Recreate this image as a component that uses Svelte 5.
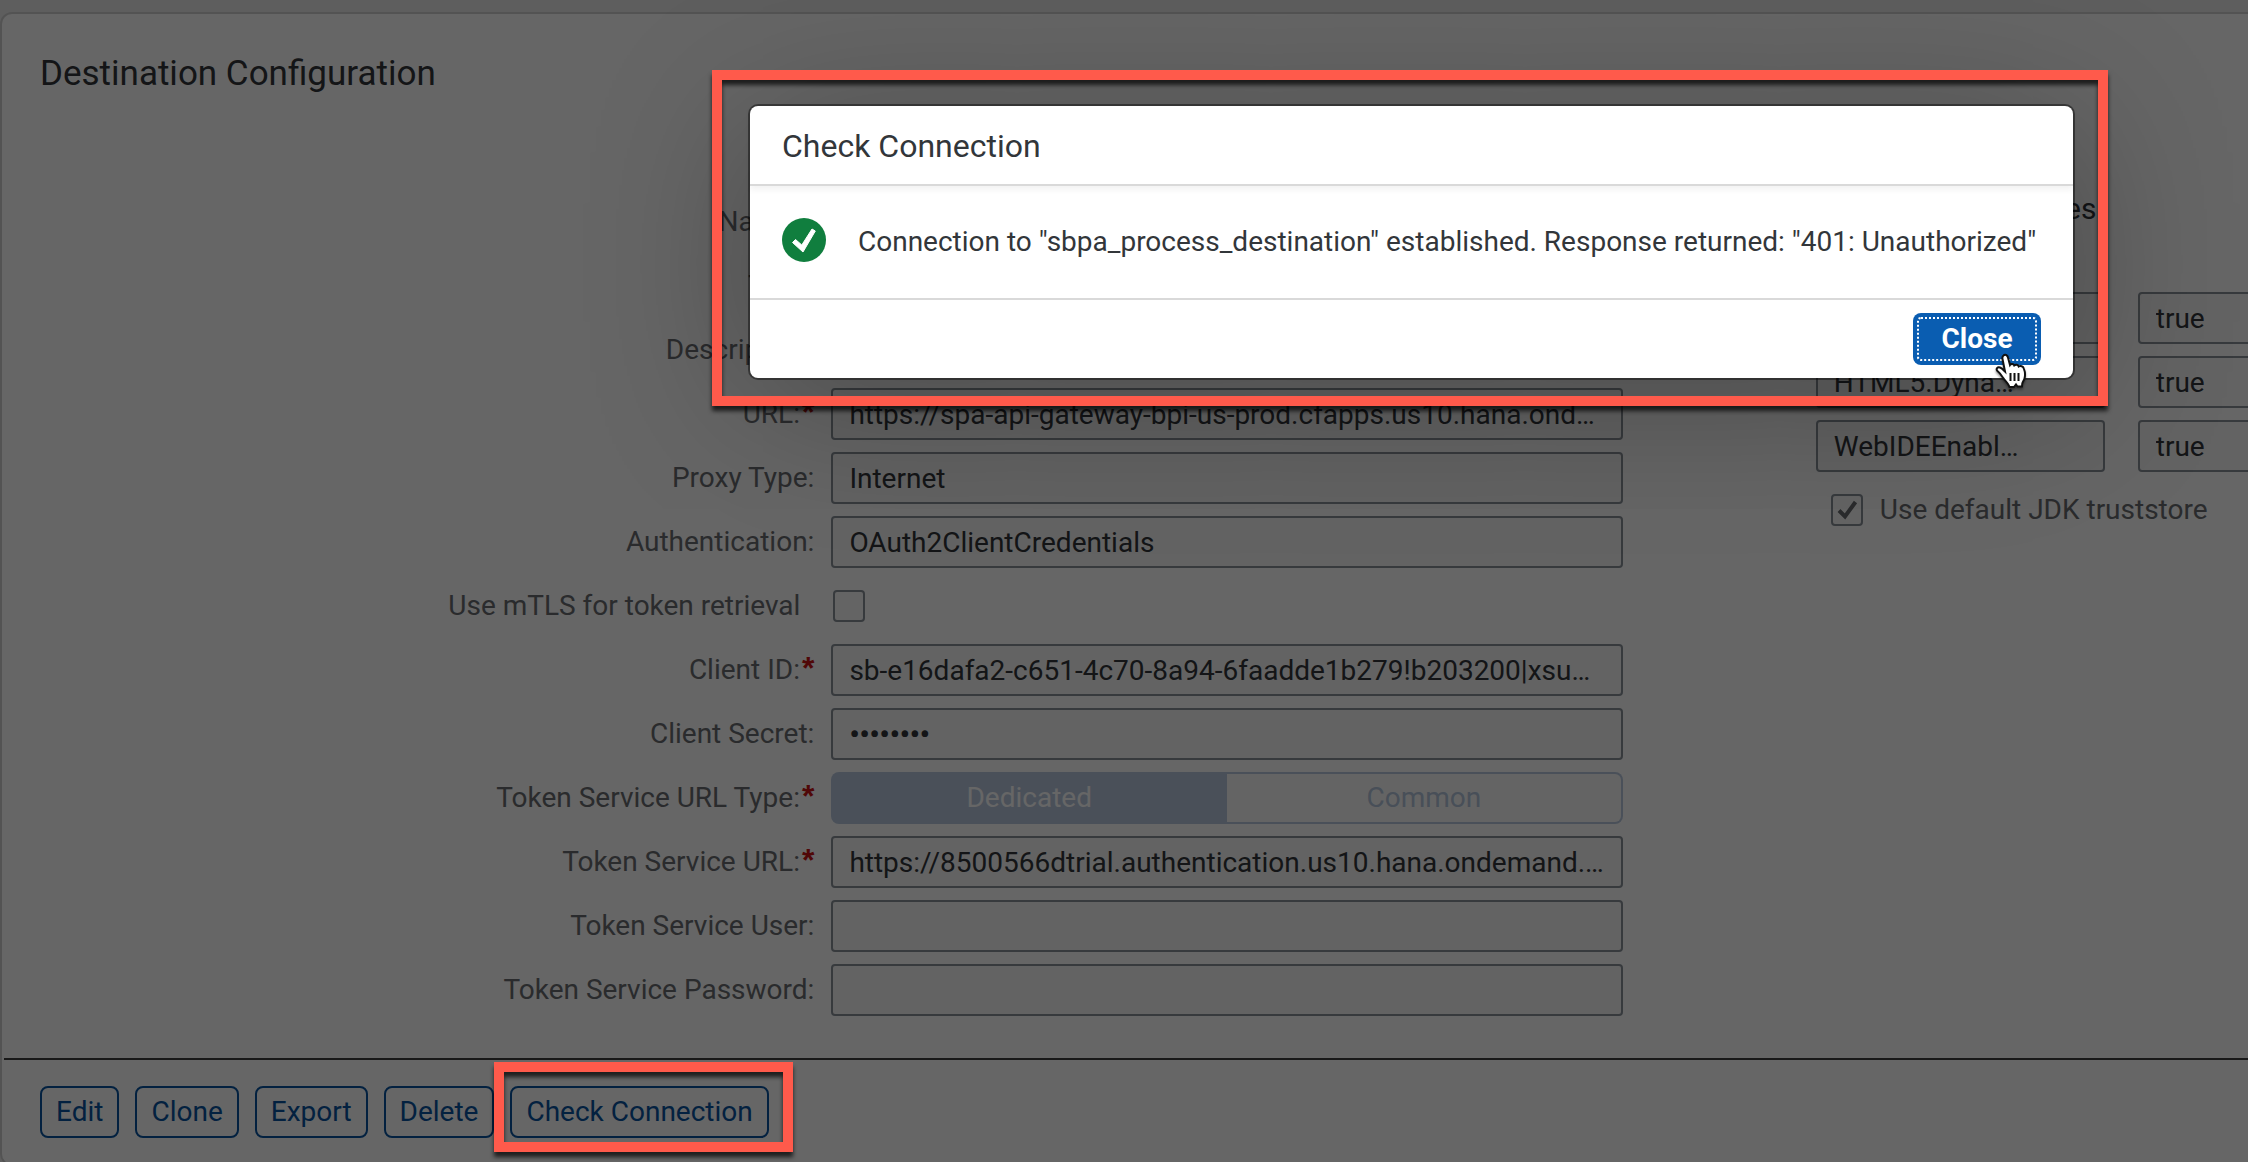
<script>
  const fields = [
    { id: 'name', label: 'Name:', required: true, value: 'sbpa_process_destination' },
    { id: 'type', label: 'Type:', value: 'HTTP' },
    { id: 'description', label: 'Description:', value: '' },
    { id: 'url', label: 'URL:', required: true, value: 'https://spa-api-gateway-bpi-us-prod.cfapps.us10.hana.ond…' },
    { id: 'proxy', label: 'Proxy Type:', value: 'Internet' },
    { id: 'auth', label: 'Authentication:', value: 'OAuth2ClientCredentials' },
    { id: 'mtls', label: 'Use mTLS for token retrieval', kind: 'checkbox' },
    { id: 'client-id', label: 'Client ID:', required: true, value: 'sb-e16dafa2-c651-4c70-8a94-6faadde1b279!b203200|xsu…' },
    { id: 'client-secret', label: 'Client Secret:', value: '••••••••', secret: true },
    { id: 'url-type', label: 'Token Service URL Type:', required: true, kind: 'segmented' },
    { id: 'token-url', label: 'Token Service URL:', required: true, value: 'https://8500566dtrial.authentication.us10.hana.ondemand.…' },
    { id: 'token-user', label: 'Token Service User:', value: '' },
    { id: 'token-password', label: 'Token Service Password:', value: '' },
  ];

  const properties = [
    { key: '', value: 'true' },
    { key: 'HTML5.Dyna…', value: 'true' },
    { key: 'WebIDEEnabl…', value: 'true' },
  ];

  const actions = ['Edit', 'Clone', 'Export', 'Delete'];
</script>

<div class="page">
  <main class="card">
    <h1>Destination Configuration</h1>

    <div class="content">
      <form class="form">
        {#each fields as field}
          <label for={field.id} class:loose={field.kind === 'checkbox'}>
            {field.label}{#if field.required}<b class="star">*</b>{/if}
          </label>
          {#if field.kind === 'checkbox'}
            <span class="check-cell"><input class="check" type="checkbox" id={field.id} /></span>
          {:else if field.kind === 'segmented'}
            <div class="segmented">
              <button type="button" id={field.id} class="selected" disabled>Dedicated</button>
              <button type="button" disabled>Common</button>
            </div>
          {:else}
            <input class="field" class:secret={field.secret} type="text" id={field.id} value={field.value} readonly />
          {/if}
        {/each}
      </form>

      <section class="extra">
        <h2>Additional Properties</h2>
        <div class="properties">
          {#each properties as property, i}
            <input class="field" type="text" aria-label="Property {i + 1} name" value={property.key} readonly />
            <input class="field" type="text" aria-label="Property {i + 1} value" value={property.value} readonly />
          {/each}
        </div>
        <label class="truststore">
          <span class="check-box">
            <input class="check" type="checkbox" checked />
            <svg viewBox="0 0 32 32" aria-hidden="true"><path d="M8 16.500 L14 22.500 L24.500 8" /></svg>
          </span>
          Use default JDK truststore
        </label>
      </section>
    </div>

    <footer class="actions">
      {#each actions as action}
        <button type="button" class="action">{action}</button>
      {/each}
      <div class="marked">
        <button type="button" class="action">Check Connection</button>
        <div class="frame around-button"></div>
      </div>
    </footer>
  </main>

  <div class="backdrop"></div>

  <div class="stage">
    <div class="dialog" role="dialog" aria-modal="true" aria-labelledby="dialog-title">
      <h2 id="dialog-title" class="dialog-title">Check Connection</h2>
      <div class="message">
        <svg class="success" viewBox="0 0 44 44" aria-hidden="true">
          <circle cx="22" cy="22" r="22" />
          <path d="M10.500 24.500 L13.500 21.500 L19.800 27 L30 11 L33.300 13 L21 34 Z" />
        </svg>
        <p>Connection to "sbpa_process_destination" established. Response returned: "401: Unauthorized"</p>
      </div>
      <div class="dialog-footer">
        <button type="button" class="close">Close</button>
        <svg class="pointer" viewBox="0 0 34 38" aria-hidden="true">
          <path d="M8.500 2.500 C10 1 12.500 2 13 4.500 L15 12 C16 10.500 18.500 10.700 19.200 12.400 C20.500 11.200 23 11.500 23.700 13.500 C25.500 12.500 28 13 28.800 15.500 C30 18.500 30.500 22 29.500 25.500 C29 27.500 27.500 29 27.200 31 L27 33.500 L22.500 33.500 L21 31.500 L19 34 L14.500 34 C13.500 31 11 28.500 8.500 25.500 C6.500 22.500 5 20 2.500 18 C0.500 16 2.500 13.500 5 14.500 C7 15.300 8.500 17 10 18.500 L7.500 6 C7.200 4.500 7.500 3.300 8.500 2.500 Z" />
          <path class="line" d="M15.500 20 V28 M19.500 20 V28 M23.500 20 V28" />
        </svg>
      </div>
    </div>
    <div class="frame around-dialog"></div>
  </div>
</div>

<style>
  :global(body) {
    margin: 0;
    background: #ececec;
  }

  .page {
    position: relative;
    box-sizing: border-box;
    height: 100vh;
    padding: 14px 0 0 2px;
    overflow: hidden;
    background: #ececec;
    color: #32363a;
    font: 28px/36px Roboto, 'Liberation Sans', sans-serif;
  }

  input,
  button {
    font: inherit;
    color: inherit;
    margin: 0;
    box-sizing: border-box;
  }

  h1,
  h2,
  p {
    margin: 0;
    font-weight: 400;
  }

  .card {
    width: calc(100% + 12px);
    background: #fff;
    border-radius: 10px;
    box-shadow: 0 0 0 2px #d0d0d0;
    padding-top: 36px;
  }

  h1 {
    padding-left: 38px;
    font-size: 35px;
    line-height: 48px;
  }

  .content {
    display: grid;
    grid-template-columns: 1582fr 432fr;
    column-gap: 193px;
    padding: 98px 12px 42px 38px;
  }

  .form {
    display: grid;
    grid-template-columns: 774fr 791fr;
    grid-auto-rows: 52px;
    gap: 12px 17px;
    align-items: center;
  }

  .form label {
    color: #6a6d70;
    text-align: right;
    white-space: nowrap;
  }

  .form .loose {
    padding-right: 14px;
  }

  .star {
    margin-left: 2px;
    color: #c81414;
    font-family: 'Liberation Sans', sans-serif;
    font-size: 32px;
    line-height: 1px;
  }

  .field {
    width: 100%;
    height: 52px;
    padding: 0 16px;
    border: 2px solid #89919a;
    border-radius: 4px;
    background: #f7f7f7;
    outline: 0;
    text-overflow: ellipsis;
  }

  .secret {
    font-weight: 700;
  }

  .check-cell {
    display: flex;
    padding-left: 2px;
  }

  .check {
    display: block;
    appearance: none;
    width: 32px;
    height: 32px;
    border: 2px solid #89919a;
    border-radius: 4px;
    background: #fbfbfb;
  }

  .segmented {
    display: grid;
    grid-template-columns: 1fr 1fr;
    height: 52px;
  }

  .segmented button {
    border: 2px solid #b9c9df;
    border-left: 0;
    border-radius: 0 8px 8px 0;
    background: #fbfbfb;
    color: #b4c5dd;
  }

  .segmented .selected {
    border: 0;
    border-radius: 8px 0 0 8px;
    background: #b8c8df;
    color: #fff;
  }

  .extra {
    min-width: 0;
    margin-top: -11px;
  }

  .extra h2 {
    font-size: 30px;
    line-height: 48px;
    white-space: nowrap;
  }

  .properties {
    display: grid;
    grid-template-columns: 289px 289px;
    gap: 12px 33px;
    margin-top: 59px;
  }

  .truststore {
    display: flex;
    align-items: center;
    gap: 17px;
    height: 52px;
    margin-top: 12px;
    padding-left: 15px;
    color: #6a6d70;
    white-space: nowrap;
  }

  .check-box {
    display: grid;
  }

  .check-box > * {
    grid-area: 1 / 1;
  }

  .check-box svg {
    width: 32px;
    height: 32px;
    fill: none;
    stroke: #6a6d70;
    stroke-width: 4;
  }

  .actions {
    display: flex;
    gap: 16px;
    margin-left: 2px;
    padding: 26px 36px;
    border-top: 2px solid #404040;
  }

  .action {
    height: 52px;
    padding: 0 14px;
    border: 2px solid #0854a0;
    border-radius: 8px;
    background: #fff;
    color: #0854a0;
    white-space: nowrap;
  }

  .marked {
    position: relative;
  }

  .backdrop {
    position: absolute;
    inset: 0;
    z-index: 1;
    background: rgba(0, 0, 0, 0.6);
  }

  .frame {
    position: absolute;
    z-index: 3;
    border: 10px solid #ff5a4b;
    pointer-events: none;
    filter: drop-shadow(0 5px 2px rgba(0, 0, 0, 0.7));
  }

  .around-button {
    inset: -24px -24px -14px -16px;
  }

  .around-dialog {
    inset: 0;
  }

  .stage {
    position: absolute;
    z-index: 2;
    top: 70px;
    left: 712px;
    right: 140px;
    padding: 36px 35px 28px 38px;
  }

  .dialog {
    border-radius: 8px;
    background: #fff;
    box-shadow:
      0 0 0 2px rgba(0, 0, 0, 0.42),
      0 20px 160px rgba(0, 0, 0, 0.3);
  }

  .dialog-title {
    padding: 16px 32px 14px;
    border-bottom: 2px solid #d9d9d9;
    box-shadow: 0 4px 6px rgba(0, 0, 0, 0.05);
    font-size: 32px;
    line-height: 48px;
  }

  .message {
    display: flex;
    align-items: flex-start;
    gap: 32px;
    padding: 32px;
    white-space: nowrap;
  }

  .message p {
    line-height: 48px;
  }

  .success {
    width: 44px;
    height: 44px;
    fill: #107e3e;
  }

  .success path {
    fill: #fff;
    stroke: #fff;
    stroke-width: 1;
    stroke-linejoin: round;
  }

  .dialog-footer {
    position: relative;
    display: flex;
    justify-content: flex-end;
    padding: 13px 32px;
    border-top: 2px solid #d9d9d9;
  }

  .close {
    width: 128px;
    height: 52px;
    border: 0;
    border-radius: 8px;
    outline: 2px dotted #fff;
    outline-offset: -6px;
    background: #0a5db1;
    color: #fff;
    font-weight: 700;
  }

  .pointer {
    position: absolute;
    right: 44px;
    bottom: -13px;
    width: 34px;
    height: 38px;
    fill: #fff;
    stroke: #111;
    stroke-width: 2;
    filter: drop-shadow(0 2px 1px rgba(0, 0, 0, 0.4));
  }

  .pointer .line {
    fill: none;
  }
</style>
